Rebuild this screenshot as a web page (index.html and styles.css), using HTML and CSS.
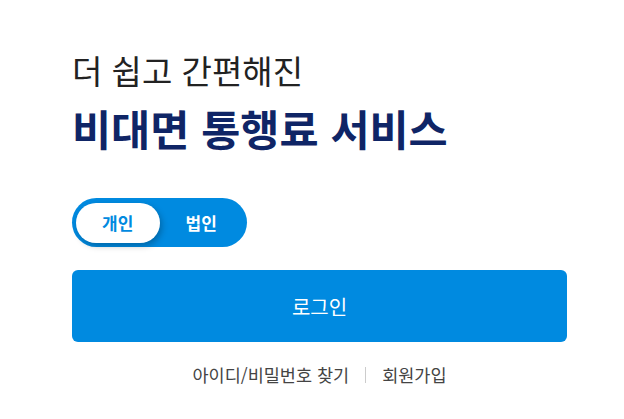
FILE: index.html
```html
<!DOCTYPE html>
<html lang="ko">
<head>
<meta charset="utf-8">
<link rel="stylesheet" href="styles.css">
</head>
<body>
<div class="page">
  <h2 class="sub">더 쉽고 간편해진</h2>
  <h1 class="title">비대면 통행료 서비스</h1>
  <div class="toggle">
    <button class="opt active">개인</button>
    <button class="opt">법인</button>
  </div>
  <button class="login">로그인</button>
  <div class="links">
    <a class="link">아이디/비밀번호 찾기</a>
    <span class="sep"></span>
    <a class="link">회원가입</a>
  </div>
</div>
</body>
</html>
```
FILE: styles.css
```css
* { box-sizing: border-box; }
html, body { margin: 0; padding: 0; background: #fff; }
body { font-family: "Noto Sans CJK KR", "Noto Sans", sans-serif; }
.page {
  width: 624px;
  padding: 50px 57px 0 72px;
  display: flex;
  flex-direction: column;
}
.sub {
  margin: 0;
  font-size: 33px;
  font-weight: 400;
  line-height: 40px;
  color: #222;
}
.title {
  margin: 11px 0 0;
  font-size: 42.5px;
  font-weight: 700;
  line-height: 54px;
  color: #0f2566;
}
.toggle {
  margin-top: 43px;
  width: 175px;
  height: 49px;
  border-radius: 25px;
  background: #008ae0;
  padding: 5px 4px;
  display: flex;
  align-items: center;
}
.opt {
  border: 0;
  background: transparent;
  font-family: inherit;
  font-size: 17px;
  font-weight: 700;
  color: #fff;
  width: 88px;
  height: 40px;
  border-radius: 20px;
  padding: 0;
}
.opt.active {
  background: #fff;
  color: #008ae0;
  box-shadow: 2px 3px 6px rgba(0,0,0,0.25);
}
.login {
  margin-top: 23px;
  width: 495px;
  height: 72px;
  border: 0;
  border-radius: 6px;
  background: #008ae0;
  color: #fff;
  font-family: inherit;
  font-size: 20px;
  font-weight: 400;
}
.links {
  margin-top: 21px;
  display: flex;
  justify-content: center;
  align-items: center;
  gap: 16px;
}
.link {
  font-size: 17.5px;
  color: #444;
  line-height: 24px;
}
.sep {
  width: 1px;
  height: 16px;
  background: #ccc;
}
```
